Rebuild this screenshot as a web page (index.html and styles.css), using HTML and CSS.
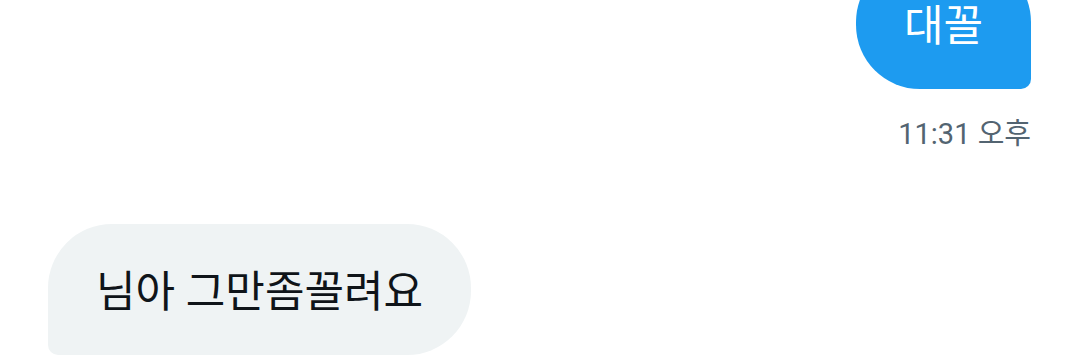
FILE: index.html
```html
<!DOCTYPE html>
<html lang="ko">
<head>
    <meta charset="UTF-8">
    <meta name="viewport" content="width=device-width, initial-scale=1.0">
    <title>메시지</title>
    <link rel="stylesheet" href="styles.css">
</head>
<body>
    <div id="conversation">
        <div class="message-group sent">
            <div class="bubble">대꼴</div>
            <div class="timestamp">11:31 오후</div>
        </div>
        <div class="message-group received">
            <div class="bubble">님아 그만좀꼴려요</div>
        </div>
    </div>
</body>
</html>
```

FILE: styles.css
```css
body {
    margin: 0;
    background-color: #ffffff;
    font-family: Roboto, "Noto Sans CJK KR", sans-serif;
    overflow: hidden;
}
#conversation {
    display: flex;
    flex-direction: column;
    padding: 0 49px 0 48px;
    margin-top: -42px; /* list is scrolled, first bubble is cut off */
}
.message-group {
    display: flex;
    flex-direction: column;
}
.sent {
    align-items: flex-end;
}
.received {
    align-items: flex-start;
    margin-top: 72px;
}
.bubble {
    font-size: 43px;
    line-height: 51px;
    padding: 43px 48px 37px;
    border-radius: 64px;
}
.sent .bubble {
    background-color: #1d9bf0;
    color: #ffffff;
    border-bottom-right-radius: 10px;
}
.received .bubble {
    background-color: #eff3f4;
    color: #0f1419;
    border-bottom-left-radius: 10px;
}
.timestamp {
    margin-top: 27px;
    font-size: 29px;
    line-height: 36px;
    color: #536471;
}
```
